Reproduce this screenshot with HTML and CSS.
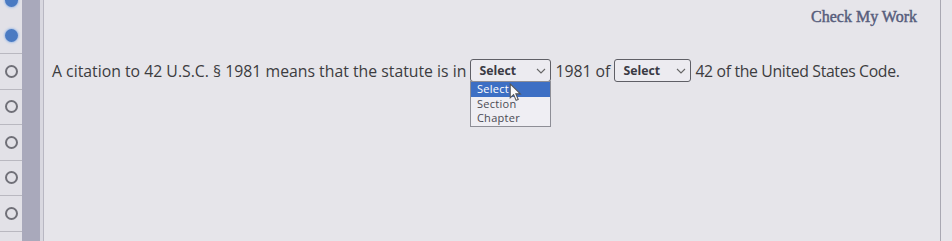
FILE: index.html
```html
<!DOCTYPE html>
<html>
<head>
<meta charset="utf-8">
<link rel="stylesheet" href="styles.css">
</head>
<body>
<div class="app">
  <div class="rail">
    <div class="slot top"><span class="radio filled"></span></div>
    <div class="slot"><span class="radio filled"></span></div>
    <div class="slot"><span class="radio"></span></div>
    <div class="slot"><span class="radio"></span></div>
    <div class="slot"><span class="radio"></span></div>
    <div class="slot"><span class="radio"></span></div>
    <div class="slot"><span class="radio"></span></div>
  </div>
  <div class="bar"></div>
  <div class="strip"></div>
  <div class="main">
    <div class="header"><span class="check">Check My Work</span></div>
    <div class="sentence">
      <span>A citation to 42 U.S.C. § 1981 means that the statute is in</span>
      <span class="select first">
        <span class="sel-label">Select</span>
        <svg class="chev" viewBox="0 0 10 6" width="10" height="6"><path d="M1 1 L5 5 L9 1" fill="none" stroke="#666" stroke-width="1.1"/></svg>
        <span class="list">
          <span class="opt active">Select</span>
          <span class="opt">Section</span>
          <span class="opt">Chapter</span>
        </span>
        <svg class="cursor" viewBox="0 0 12 18" width="13" height="19"><path d="M1 1 L1 14 L4.2 11 L6.6 16.5 L8.6 15.6 L6.3 10.3 L10.6 10.3 Z" fill="#fafafa" stroke="#555" stroke-width="1"/></svg>
      </span>
      <span>1981 of</span>
      <span class="select second">
        <span class="sel-label">Select</span>
        <svg class="chev" viewBox="0 0 10 6" width="10" height="6"><path d="M1 1 L5 5 L9 1" fill="none" stroke="#666" stroke-width="1.1"/></svg>
      </span>
      <span class="tail">42 of the United States Code.</span>
    </div>
  </div>
  <div class="edge"></div>
  <div class="after"></div>
</div>
</body>
</html>
```
FILE: styles.css
```css
html, body {
  margin: 0;
  padding: 0;
  background: #e6e5ea;
}
.app {
  display: flex;
  width: 952px;
  height: 241px;
  overflow: hidden;
}
.rail {
  width: 22px;
  background: #e2e1e7;
  display: flex;
  flex-direction: column;
  margin-top: -17px;
}
.slot {
  height: 35.5px;
  flex: none;
  display: flex;
  align-items: center;
  justify-content: center;
  border-bottom: 1px solid #b9b8c0;
  box-sizing: border-box;
}
.slot.top {
  border-bottom: none;
}
.radio {
  width: 9px;
  height: 9px;
  border: 2px solid #707078;
  border-radius: 50%;
  box-sizing: content-box;
  margin-left: 1px;
}
.radio.filled {
  width: 13px;
  height: 13px;
  border: none;
  background: #4a7ac2;
  box-shadow: 0 0 2px 1px #a9c1e6;
}
.bar {
  width: 18px;
  background: #a9a9bb;
}
.strip {
  width: 3px;
  background: #d9d8e0;
  border-right: 1px solid #b8b7c2;
}
.main {
  flex: 1;
  display: flex;
  flex-direction: column;
  padding: 0 23px 0 8px;
}
.header {
  display: flex;
  justify-content: flex-end;
  padding-top: 8px;
  height: 28px;
  box-sizing: border-box;
}
.check {
  font-family: "Liberation Serif", serif;
  font-size: 16px;
  font-weight: normal;
  -webkit-text-stroke: 0.45px #575d7c;
  color: #575d7c;
}
.sentence {
  display: flex;
  align-items: center;
  gap: 4px;
  margin-top: 31px;
  font-family: "Open Sans", sans-serif;
  font-size: 15.8px;
  color: #3c3c40;
  white-space: nowrap;
}
.tail {
  letter-spacing: -0.35px;
}
.select {
  position: relative;
  display: flex;
  align-items: center;
  justify-content: space-between;
  height: 23px;
  box-sizing: border-box;
  border: 1.5px solid #5f5f66;
  border-radius: 3px;
  background: #ecebf0;
  padding: 0 4px 0 8px;
}
.select.first { width: 81px; }
.select.second { width: 77px; }
.sel-label {
  font-family: "Open Sans", sans-serif;
  font-weight: bold;
  font-size: 12.3px;
  color: #3a3a44;
}
.chev { display: block; }
.list {
  position: absolute;
  left: -1.5px;
  top: 21px;
  width: 81px;
  box-sizing: border-box;
  display: flex;
  flex-direction: column;
  border: 1px solid #8e8e96;
  background: #efeef3;
}
.opt {
  font-family: "Open Sans", sans-serif;
  font-size: 11px;
  line-height: 14.5px;
  color: #4a4a52;
  padding-left: 6px;
  letter-spacing: 0.3px;
}
.opt.active {
  background: #3d6fc4;
  color: #ffffff;
}
.cursor {
  position: absolute;
  left: 38px;
  top: 23px;
}
.edge {
  width: 1px;
  background: #a9a8b2;
}
.after {
  width: 11px;
  background: #e6e5ea;
}
```
